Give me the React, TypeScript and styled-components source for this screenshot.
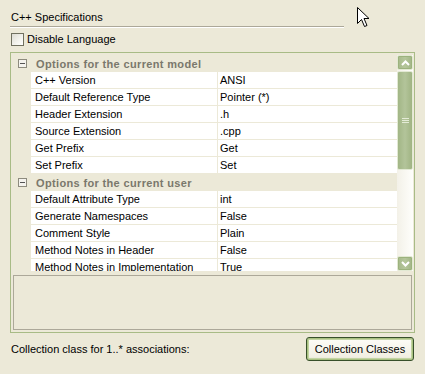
import React from "react";
import styled, { createGlobalStyle } from "styled-components";

type Row = { label: string; value: string };
type Group = { title: string; rows: Row[] };

const groups: Group[] = [
  {
    title: "Options for the current model",
    rows: [
      { label: "C++ Version", value: "ANSI" },
      { label: "Default Reference Type", value: "Pointer (*)" },
      { label: "Header Extension", value: ".h" },
      { label: "Source Extension", value: ".cpp" },
      { label: "Get Prefix", value: "Get" },
      { label: "Set Prefix", value: "Set" },
    ],
  },
  {
    title: "Options for the current user",
    rows: [
      { label: "Default Attribute Type", value: "int" },
      { label: "Generate Namespaces", value: "False" },
      { label: "Comment Style", value: "Plain" },
      { label: "Method Notes in Header", value: "False" },
      { label: "Method Notes in Implementation", value: "True" },
    ],
  },
];

const App: React.FC = () => {
  return (
    <Page>
      <GlobalStyle />
      <Title>C++ Specifications</Title>
      <Rule />
      <CheckRow>
        <CheckBox />
        <span>Disable Language</span>
      </CheckRow>

      <Frame>
        <Grid>
          <Rows>
            {groups.map((g) => (
              <React.Fragment key={g.title}>
                <HeaderRow>
                  <Gutter>
                    <MinusBox>
                      <svg width="7" height="7" viewBox="0 0 7 7">
                        <rect x="1" y="3" width="5" height="1" fill="#555" />
                      </svg>
                    </MinusBox>
                  </Gutter>
                  <HeaderText>{g.title}</HeaderText>
                </HeaderRow>
                {g.rows.map((r) => (
                  <PropRow key={r.label}>
                    <Gutter />
                    <LabelCell>{r.label}</LabelCell>
                    <ValueCell>{r.value}</ValueCell>
                  </PropRow>
                ))}
              </React.Fragment>
            ))}
          </Rows>
          <ScrollBar>
            <ScrollButton>
              <svg width="9" height="6" viewBox="0 0 9 6">
                <path d="M1 5 L4.5 1.5 L8 5" stroke="#fff" strokeWidth="2" fill="none" />
              </svg>
            </ScrollButton>
            <Thumb>
              <svg width="7" height="6" viewBox="0 0 7 6">
                <rect x="0" y="0" width="7" height="1" fill="#E4EBD6" />
                <rect x="0" y="2" width="7" height="1" fill="#E4EBD6" />
                <rect x="0" y="4" width="7" height="1" fill="#E4EBD6" />
              </svg>
            </Thumb>
            <Track />
            <ScrollButton>
              <svg width="9" height="6" viewBox="0 0 9 6">
                <path d="M1 1 L4.5 4.5 L8 1" stroke="#fff" strokeWidth="2" fill="none" />
              </svg>
            </ScrollButton>
          </ScrollBar>
        </Grid>
        <Description />
      </Frame>

      <BottomRow>
        <span>Collection class for 1..* associations:</span>
        <XPButton>Collection Classes</XPButton>
      </BottomRow>

      <Cursor width="13" height="21" viewBox="0 0 13 21">
        <path
          d="M0.5 0.5 L0.5 16.5 L4.5 12.5 L7.5 19.5 L10 18.5 L7 11.5 L12 11.5 Z"
          fill="#fff"
          stroke="#000"
          strokeWidth="1"
        />
      </Cursor>
    </Page>
  );
};

export default App;

const GlobalStyle = createGlobalStyle`
  html, body {
    margin: 0;
    padding: 0;
    background: #ece9d8;
  }
`;

const Page = styled.div`
  position: relative;
  width: 425px;
  height: 374px;
  box-sizing: border-box;
  padding: 10px 11px 0 10px;
  background: #ece9d8;
  font-family: "Liberation Sans", Arial, sans-serif;
  font-size: 11px;
  color: #000;
  display: flex;
  flex-direction: column;
`;

const Title = styled.div`
  padding-left: 1px;
  height: 14px;
  line-height: 14px;
`;

const Rule = styled.div`
  margin-top: 2px;
  width: 334px;
  height: 1px;
  background: #aca899;
  box-shadow: 0 1px 0 #fff;
`;

const CheckRow = styled.label`
  margin-top: 6px;
  margin-left: 1px;
  display: flex;
  align-items: center;
  gap: 3px;
  height: 13px;
  line-height: 13px;
`;

const CheckBox = styled.span`
  width: 11px;
  height: 11px;
  border: 1px solid #70705f;
  background: linear-gradient(135deg, #dcdbd2 0%, #f4f4ee 60%, #ffffff 100%);
`;

const Frame = styled.div`
  margin-top: 6px;
  width: 405px;
  height: 281px;
  box-sizing: border-box;
  border: 1px solid #a8bb86;
  padding: 2px 1px 2px 2px;
  display: flex;
  flex-direction: column;
  gap: 4px;
`;

const Grid = styled.div`
  height: 217px;
  display: flex;
  overflow: hidden;
`;

const Rows = styled.div`
  width: 384px;
  display: flex;
  flex-direction: column;
  background: #ffffff;
`;

const HeaderRow = styled.div`
  flex: none;
  height: 17px;
  display: flex;
  align-items: center;
  background: #ece9d8;
`;

const Gutter = styled.div`
  width: 18px;
  height: 100%;
  flex: none;
  background: #ece9d8;
  display: flex;
  align-items: center;
  justify-content: center;
`;

const MinusBox = styled.span`
  width: 7px;
  height: 7px;
  border: 1px solid #8d8b7e;
  background: #f4f3ee;
  display: flex;
  margin-left: 1px;
`;

const HeaderText = styled.span`
  padding-left: 5px;
  font-weight: bold;
  letter-spacing: 0.35px;
  color: #7a786c;
`;

const PropRow = styled.div`
  flex: none;
  height: 16px;
  display: flex;
  border-bottom: 1px solid #ece9d8;
  line-height: 16px;
`;

const LabelCell = styled.div`
  width: 182px;
  padding-left: 4px;
  border-right: 1px solid #ece9d8;
  white-space: nowrap;
  overflow: hidden;
`;

const ValueCell = styled.div`
  flex: 1;
  padding-left: 2px;
  white-space: nowrap;
`;

const ScrollBar = styled.div`
  width: 16px;
  display: flex;
  flex-direction: column;
  background: linear-gradient(90deg, #f3f1e8, #fefefb);
`;

const ScrollButton = styled.div`
  flex: none;
  height: 15px;
  box-sizing: border-box;
  border: 1px solid #e2e9d3;
  border-radius: 2px;
  background: linear-gradient(90deg, #a6b98a, #b5c69b 50%, #a1b585);
  box-shadow: inset 0 0 0 1px #9cb27d;
  display: flex;
  align-items: center;
  justify-content: center;
`;

const Thumb = styled.div`
  flex: none;
  height: 99px;
  margin-top: 1px;
  box-sizing: border-box;
  border: 1px solid #e2e9d3;
  border-radius: 2px;
  background: linear-gradient(90deg, #a2b686, #b3c49a 50%, #a0b483);
  display: flex;
  align-items: center;
  justify-content: center;
`;

const Track = styled.div`
  flex: 1;
`;

const Description = styled.div`
  height: 55px;
  width: 399px;
  box-sizing: border-box;
  border: 1px solid #aca899;
  background: #ece9d8;
`;

const BottomRow = styled.div`
  margin-top: 4px;
  padding-left: 1px;
  width: 403px;
  height: 24px;
  display: flex;
  align-items: center;
  justify-content: space-between;
`;

const XPButton = styled.button`
  width: 108px;
  height: 24px;
  box-sizing: border-box;
  border: 1px solid #37502a;
  border-radius: 3px;
  background: linear-gradient(180deg, #fdfdf8, #f1efe2 85%, #e3e0cf);
  box-shadow: inset 0 0 0 1px #a8c180, inset 0 0 0 2px #c2d4a2;
  font-family: "Liberation Sans", Arial, sans-serif;
  font-size: 11px;
  color: #000;
  padding: 0;
`;

const Cursor = styled.svg`
  position: absolute;
  left: 357px;
  top: 7px;
`;
